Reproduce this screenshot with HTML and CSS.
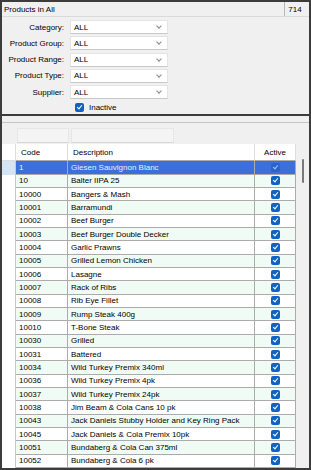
FILE: index.html
```html
<!DOCTYPE html>
<html lang="en">
<head>
  <meta charset="UTF-8" />
  <title>Products in All</title>
  <link rel="stylesheet" href="styles.css">
</head>
<body>
  <div class="window">

    <div class="titlebar">
      <span class="title">Products in All</span>
      <span class="count">714</span>
    </div>

    <!-- Filters -->
    <div class="filters">
      <div class="field"><span class="lbl">Category:</span><div class="combo">ALL</div></div>
      <div class="field"><span class="lbl">Product Group:</span><div class="combo">ALL</div></div>
      <div class="field"><span class="lbl">Product Range:</span><div class="combo">ALL</div></div>
      <div class="field"><span class="lbl">Product Type:</span><div class="combo">ALL</div></div>
      <div class="field"><span class="lbl">Supplier:</span><div class="combo">ALL</div></div>
      <div class="check-row"><span class="chk"></span><span>Inactive</span></div>
    </div>

    <div class="splitter"></div>

    <!-- Grid -->
    <div class="lower">
      <div class="search-row">
        <div class="search s-code"></div>
        <div class="search s-desc"></div>
      </div>
      <div class="grid">
        <div class="grid-main">
          <div class="row head"><div class="c rh"></div><div class="c">Code</div><div class="c">Description</div><div class="c act">Active</div></div>
          <div class="row sel"><div class="c rh"></div><div class="c">1</div><div class="c">Giesen Sauvignon Blanc</div><div class="c act"><span class="chk"></span></div></div>
          <div class="row alt"><div class="c rh"></div><div class="c">10</div><div class="c">Balter IIPA 25</div><div class="c act"><span class="chk"></span></div></div>
          <div class="row"><div class="c rh"></div><div class="c">10000</div><div class="c">Bangers &amp; Mash</div><div class="c act"><span class="chk"></span></div></div>
          <div class="row alt"><div class="c rh"></div><div class="c">10001</div><div class="c">Barramundi</div><div class="c act"><span class="chk"></span></div></div>
          <div class="row"><div class="c rh"></div><div class="c">10002</div><div class="c">Beef Burger</div><div class="c act"><span class="chk"></span></div></div>
          <div class="row alt"><div class="c rh"></div><div class="c">10003</div><div class="c">Beef Burger Double Decker</div><div class="c act"><span class="chk"></span></div></div>
          <div class="row"><div class="c rh"></div><div class="c">10004</div><div class="c">Garlic Prawns</div><div class="c act"><span class="chk"></span></div></div>
          <div class="row alt"><div class="c rh"></div><div class="c">10005</div><div class="c">Grilled Lemon Chicken</div><div class="c act"><span class="chk"></span></div></div>
          <div class="row"><div class="c rh"></div><div class="c">10006</div><div class="c">Lasagne</div><div class="c act"><span class="chk"></span></div></div>
          <div class="row alt"><div class="c rh"></div><div class="c">10007</div><div class="c">Rack of Ribs</div><div class="c act"><span class="chk"></span></div></div>
          <div class="row"><div class="c rh"></div><div class="c">10008</div><div class="c">Rib Eye Fillet</div><div class="c act"><span class="chk"></span></div></div>
          <div class="row alt"><div class="c rh"></div><div class="c">10009</div><div class="c">Rump Steak 400g</div><div class="c act"><span class="chk"></span></div></div>
          <div class="row"><div class="c rh"></div><div class="c">10010</div><div class="c">T-Bone Steak</div><div class="c act"><span class="chk"></span></div></div>
          <div class="row alt"><div class="c rh"></div><div class="c">10030</div><div class="c">Grilled</div><div class="c act"><span class="chk"></span></div></div>
          <div class="row"><div class="c rh"></div><div class="c">10031</div><div class="c">Battered</div><div class="c act"><span class="chk"></span></div></div>
          <div class="row alt"><div class="c rh"></div><div class="c">10034</div><div class="c">Wild Turkey Premix 340ml</div><div class="c act"><span class="chk"></span></div></div>
          <div class="row"><div class="c rh"></div><div class="c">10036</div><div class="c">Wild Turkey Premix 4pk</div><div class="c act"><span class="chk"></span></div></div>
          <div class="row alt"><div class="c rh"></div><div class="c">10037</div><div class="c">Wild Turkey Premix 24pk</div><div class="c act"><span class="chk"></span></div></div>
          <div class="row"><div class="c rh"></div><div class="c">10038</div><div class="c">Jim Beam &amp; Cola Cans 10 pk</div><div class="c act"><span class="chk"></span></div></div>
          <div class="row alt"><div class="c rh"></div><div class="c">10043</div><div class="c">Jack Daniels Stubby Holder and Key Ring Pack</div><div class="c act"><span class="chk"></span></div></div>
          <div class="row"><div class="c rh"></div><div class="c">10045</div><div class="c">Jack Daniels &amp; Cola Premix 10pk</div><div class="c act"><span class="chk"></span></div></div>
          <div class="row alt"><div class="c rh"></div><div class="c">10051</div><div class="c">Bundaberg &amp; Cola Can 375ml</div><div class="c act"><span class="chk"></span></div></div>
          <div class="row"><div class="c rh"></div><div class="c">10052</div><div class="c">Bundaberg &amp; Cola 6 pk</div><div class="c act"><span class="chk"></span></div></div>
        </div>
        <div class="scrollbar"><div class="thumb"></div></div>
      </div>
    </div>

  </div>
</body>
</html>
```

FILE: styles.css
```css
/* --------- Base --------- */
body { margin:0; font-family:"Liberation Sans", Arial, sans-serif; font-size:8px; color:#000 }
.window {
  width:311px; height:470px; box-sizing:border-box;
  border:2px solid #3c3c3c; background:#f0f0f0;
  display:flex; flex-direction:column; overflow:hidden
}

/* --------- Title bar --------- */
.titlebar {
  height:14px; flex:none; display:flex; align-items:center;
  border-bottom:1px solid #dadada; padding-left:2px
}
.title { flex:1 }
.count {
  width:20px; height:100%; display:flex; align-items:center; justify-content:center;
  border-left:1px solid #b8b8b8; margin-right:4px
}

/* --------- Filters --------- */
.filters { height:97px; flex:none; box-sizing:border-box; padding-top:3px }
.field { display:flex; align-items:center; height:14px; margin-bottom:2.33px }
.field .lbl { width:68px; text-align:right; padding-right:6px; box-sizing:border-box; }
.combo {
  width:98px; height:14px; box-sizing:border-box; position:relative;
  background:#fff; border:1px solid #e4e4e4; border-bottom-color:#c8c8c8;
  display:flex; align-items:center; padding-left:3px; border-radius:1px
}
.combo::after {
  content:""; position:absolute; right:6px; top:3px;
  width:3px; height:3px; border-right:1px solid #8a8a8a; border-bottom:1px solid #8a8a8a;
  transform:rotate(45deg)
}
.check-row { display:flex; align-items:center; gap:5px; margin-top:3.4px; padding-left:73px; height:9px }

.chk {
  width:9px; height:9px; box-sizing:border-box; border-radius:2px;
  background:#0f63c4; position:relative; display:inline-block
}
.chk::after {
  content:""; position:absolute; left:3px; top:1px;
  width:2px; height:4px; border-right:1px solid #fff; border-bottom:1px solid #fff;
  transform:rotate(40deg)
}

.splitter { height:2px; flex:none; background:#3c3c3c }

/* --------- Grid --------- */
.lower { flex:1; min-height:0; display:flex; flex-direction:column; margin-top:6px; border-top:1px solid #c4c4c4; padding-top:5px }
.search-row { display:flex; gap:2px; height:15px; flex:none; padding-left:15px; margin-bottom:1px }
.search { height:15px; box-sizing:border-box; background:#f4f4f4; border:1px solid #e6e6e6; border-bottom-color:#d6d6d6 }
.s-code { width:52px }
.s-desc { width:103px }

.grid { flex:1; min-height:0; display:flex; background:#fff; overflow:hidden }
.grid-main { flex:1 }
.row {
  display:grid; grid-template-columns:14px 52px 187px 41px;
  height:13.33px; box-sizing:border-box
}
.row .c {
  display:flex; align-items:center; padding-left:3px; box-sizing:border-box;
  border-right:1px solid #ababab; border-bottom:1px solid #ababab; white-space:nowrap; overflow:hidden
}
.row .rh { border-bottom:none; border-right-color:#c8c8c8; padding:0 }
.row .act { justify-content:center; padding-left:0 }
.row.head { height:17.4px }
.row.head .c { border-right-color:#dcdcdc; border-bottom-color:#ababab; padding-left:5px }
.row.head .act { padding-left:0 }
.row.head .rh { border-bottom:1px solid #dcdcdc; padding:0 }
.row.alt .c { background:#f0fbf6 }
.row.alt .rh { background:#fff }
.row.sel .c { background:#3c6fda; color:#e8eeff }
.row.sel .rh { background:#d4e3f6 }
.row.sel .chk { background:#2d63c9 }
.row.sel .chk::after { border-color:#a8c4f0 }

.scrollbar { width:13px; flex:none; background:#f0f0f0; position:relative }
.thumb { position:absolute; left:6px; top:15px; width:2px; height:24px; background:#7a7a7a; border-radius:1px }
```
